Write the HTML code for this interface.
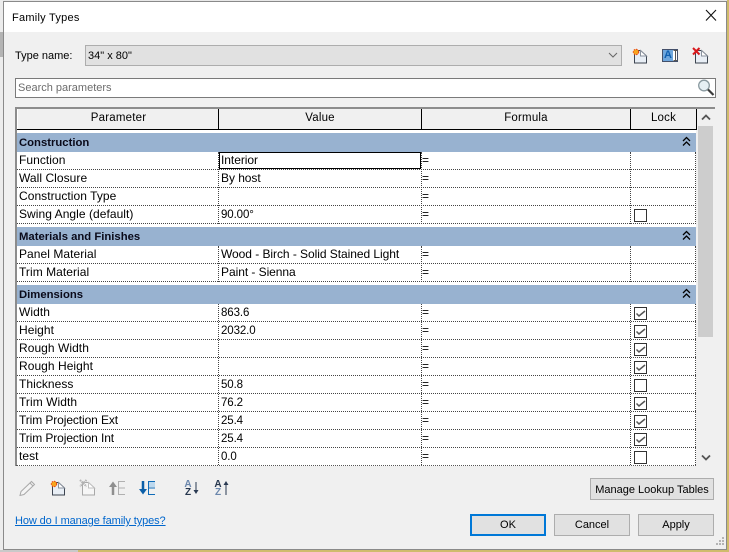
<!DOCTYPE html>
<html><head><meta charset="utf-8">
<style>
html,body{margin:0;padding:0;width:729px;height:552px;overflow:hidden;background:#e8e8e8;font-family:"Liberation Sans",sans-serif;font-size:12px;color:#000}
div,a,svg{position:absolute;box-sizing:border-box}
.t{white-space:nowrap;line-height:16px;height:16px;letter-spacing:.05px}
.s{font-size:11px;letter-spacing:0}
.v{letter-spacing:-.05px}
.n{font-size:11.5px;letter-spacing:-.1px;margin-top:1px}
.band{left:17px;width:679px;height:19px;background:#98b2d0}
.band .t{left:2px;top:2px;font-weight:bold;color:#0a0a1a;letter-spacing:0;font-size:11.3px}
.h{top:109px;height:20px;background:#f0f0f0;text-align:center;line-height:19px;font-size:11.5px;letter-spacing:.2px}
.dh{height:0;border-top:1px dotted #444}
.dv{width:0;border-left:1px dotted #444}
.cb{left:634px;width:13px;height:13px;border:1px solid #333;background:#fff}
.btn{background:#e1e1e1;border:1px solid #adadad;text-align:center;font-size:11px;white-space:nowrap}
</style></head><body>
<div style="left:0;top:0;width:3px;height:552px;background:#ececec"></div>
<div style="left:0;top:32px;width:3px;height:25px;background:#b4b4b4"></div>
<div style="left:727px;top:0;width:2px;height:552px;background:#cfbb6c"></div>
<div style="left:0;top:550px;width:729px;height:2px;background:#cfbb6c"></div>
<div style="left:0;top:550px;width:78px;height:2px;background:#c9c9c9"></div>
<div style="left:3px;top:1px;width:724px;height:549px;background:#f0f0f0;border:1px solid #8a8a8a"></div>
<div style="left:4px;top:2px;width:722px;height:30px;background:#fff"></div>
<div class="t s" style="left:12px;top:10px;letter-spacing:.25px">Family Types</div>
<svg style="left:705px;top:9px" width="12" height="13" viewBox="0 0 12 13"><path d="M1 1l10 10.500M11 1L1 11.500" stroke="#111" stroke-width="1.100" fill="none"/></svg>

<div class="t s" style="left:15px;top:48px">Type name:</div>
<div style="left:85px;top:45px;width:537px;height:21px;background:#e1e1e1;border:1px solid #adadad"></div>
<div class="t s" style="left:88px;top:48px">34" x 80"</div>
<svg style="left:608px;top:52px" width="10" height="7"><path d="M1 1l4 4 4-4" stroke="#666" fill="none"/></svg>

<svg style="left:631px;top:45px" width="18" height="19" viewBox="0 0 18 19"><path d="M3.500 5.500H9.500l6 5.500v7h-12z" fill="#e8eef5" stroke="#3c4450"/><path d="M9.500 5.500v5.500h6z" fill="#fff" stroke="#8a929e"/><circle cx="5" cy="7" r="2.700" fill="#f7a51e" stroke="#e8420e" stroke-dasharray="1.500 1"/></svg>
<div style="left:662px;top:49px;width:16px;height:13px;background:#fff;border:1px solid #44506a"></div>
<div style="left:663px;top:50px;width:10px;height:11px;background:#6ea6dc"></div>
<div style="left:663px;top:49px;width:10px;height:13px;color:#0f5fb0;font-weight:bold;font-size:11px;line-height:13px;text-align:center">A</div>
<svg style="left:673px;top:50px" width="5" height="11"><path d="M.5.500h4M.5 10.500h4M2.500.500v10" stroke="#555" fill="none"/></svg>
<svg style="left:692px;top:45px" width="18" height="19" viewBox="0 0 18 19"><path d="M3.500 5.500H9.500l6 5.500v7h-12z" fill="#e8eef5" stroke="#3c4450"/><path d="M9.500 5.500v5.500h6z" fill="#fff" stroke="#8a929e"/><path d="M1 3l6.500 6.500M7.500 3L1 9.500" stroke="#d8181c" stroke-width="2" fill="none"/></svg>

<div style="left:15px;top:78px;width:701px;height:20px;background:#fff;border:1px solid #7a7a7a"></div>
<div class="t s" style="left:18px;top:80px;color:#6d6d6d">Search parameters</div>
<svg style="left:697px;top:79px" width="18" height="18" viewBox="0 0 18 18"><circle cx="7" cy="6.500" r="5.300" fill="#e6f0f4" stroke="#8a9aa0" stroke-width="1.300"/><path d="M11 10.500l5.500 5.500" stroke="#3c3c3c" stroke-width="2.200"/></svg>

<!-- grid -->
<div style="left:15px;top:107px;width:700px;height:359px;background:#fff"></div>
<div style="left:15px;top:107px;width:700px;height:2px;background:#8c8c8c"></div>
<div style="left:15px;top:107px;width:2px;height:359px;background:#8c8c8c"></div>
<div style="left:16px;top:465px;width:680px;height:0;border-top:1px dotted #555"></div>
<div style="left:696px;top:109px;width:19px;height:357px;background:#f0f0f0"></div>
<div style="left:698px;top:126px;width:15px;height:211px;background:#cdcdcd"></div>
<svg style="left:701px;top:114px" width="10" height="7"><path d="M1 5.500l4-4 4 4" stroke="#555" stroke-width="1.800" fill="none"/></svg>
<svg style="left:701px;top:454px" width="10" height="7"><path d="M1 1.500l4 4 4-4" stroke="#555" stroke-width="1.800" fill="none"/></svg>

<div class="h" style="left:18px;width:201px">Parameter</div>
<div class="h" style="left:219px;width:202px">Value</div>
<div class="h" style="left:422px;width:208px">Formula</div>
<div class="h" style="left:631px;width:65px">Lock</div>
<div style="left:17px;top:129px;width:680px;height:1px;background:#000"></div>
<div style="left:218px;top:109px;width:1px;height:20px;background:#000"></div>
<div style="left:421px;top:109px;width:1px;height:20px;background:#000"></div>
<div style="left:630px;top:109px;width:1px;height:20px;background:#000"></div>
<div style="left:696px;top:109px;width:1px;height:21px;background:#000"></div>

<!-- bands -->
<div class="band" style="top:133px"><div class="t">Construction</div></div>
<div class="band" style="top:227px"><div class="t">Materials and Finishes</div></div>
<div class="band" style="top:285px"><div class="t">Dimensions</div></div>
<svg style="left:682px;top:136px" width="9" height="11"><path d="M1 5l3.500-3.500L8 5M1 9.500L4.500 6 8 9.500" stroke="#000" stroke-width="1.300" fill="none"/></svg>
<svg style="left:682px;top:230px" width="9" height="11"><path d="M1 5l3.500-3.500L8 5M1 9.500L4.500 6 8 9.500" stroke="#000" stroke-width="1.300" fill="none"/></svg>
<svg style="left:682px;top:288px" width="9" height="11"><path d="M1 5l3.500-3.500L8 5M1 9.500L4.500 6 8 9.500" stroke="#000" stroke-width="1.300" fill="none"/></svg>

<!-- dotted horizontals -->
<div class="dh" style="left:17px;width:679px;top:169px"></div>
<div class="dh" style="left:17px;width:679px;top:187px"></div>
<div class="dh" style="left:17px;width:679px;top:205px"></div>
<div class="dh" style="left:17px;width:679px;top:223px"></div>
<div class="dh" style="left:17px;width:679px;top:263px"></div>
<div class="dh" style="left:17px;width:679px;top:281px"></div>
<div class="dh" style="left:17px;width:679px;top:321px"></div>
<div class="dh" style="left:17px;width:679px;top:339px"></div>
<div class="dh" style="left:17px;width:679px;top:357px"></div>
<div class="dh" style="left:17px;width:679px;top:375px"></div>
<div class="dh" style="left:17px;width:679px;top:393px"></div>
<div class="dh" style="left:17px;width:679px;top:411px"></div>
<div class="dh" style="left:17px;width:679px;top:429px"></div>
<div class="dh" style="left:17px;width:679px;top:447px"></div>
<!-- dotted verticals -->
<div class="dv" style="left:218px;top:152px;height:72px"></div><div class="dv" style="left:421px;top:152px;height:72px"></div><div class="dv" style="left:630px;top:152px;height:72px"></div><div class="dv" style="left:695px;top:152px;height:72px"></div>
<div class="dv" style="left:218px;top:246px;height:36px"></div><div class="dv" style="left:421px;top:246px;height:36px"></div><div class="dv" style="left:630px;top:246px;height:36px"></div><div class="dv" style="left:695px;top:246px;height:36px"></div>
<div class="dv" style="left:218px;top:304px;height:161px"></div><div class="dv" style="left:421px;top:304px;height:161px"></div><div class="dv" style="left:630px;top:304px;height:161px"></div><div class="dv" style="left:695px;top:304px;height:161px"></div>

<!-- active cell -->
<div style="left:219px;top:152px;width:202px;height:17px;background:#fff;border:1px solid #000"></div>

<!-- labels -->
<div class="t" style="left:19px;top:152px">Function</div><div class="t v" style="left:221px;top:152px">Interior</div><div class="t" style="left:422px;top:152px">=</div>
<div class="t" style="left:19px;top:170px">Wall Closure</div><div class="t v" style="left:221px;top:170px">By host</div><div class="t" style="left:422px;top:170px">=</div>
<div class="t" style="left:19px;top:188px">Construction Type</div><div class="t" style="left:422px;top:188px">=</div>
<div class="t" style="left:19px;top:206px">Swing Angle (default)</div><div class="t n" style="left:221px;top:206px">90.00°</div><div class="t" style="left:422px;top:206px">=</div>
<div class="t" style="left:19px;top:246px">Panel Material</div><div class="t v" style="left:221px;top:246px">Wood - Birch - Solid Stained Light</div><div class="t" style="left:422px;top:246px">=</div>
<div class="t" style="left:19px;top:264px">Trim Material</div><div class="t v" style="left:221px;top:264px">Paint - Sienna</div><div class="t" style="left:422px;top:264px">=</div>
<div class="t" style="left:19px;top:304px">Width</div><div class="t n" style="left:221px;top:304px">863.6</div><div class="t" style="left:422px;top:304px">=</div>
<div class="t" style="left:19px;top:322px">Height</div><div class="t n" style="left:221px;top:322px">2032.0</div><div class="t" style="left:422px;top:322px">=</div>
<div class="t" style="left:19px;top:340px">Rough Width</div><div class="t" style="left:422px;top:340px">=</div>
<div class="t" style="left:19px;top:358px">Rough Height</div><div class="t" style="left:422px;top:358px">=</div>
<div class="t" style="left:19px;top:376px">Thickness</div><div class="t n" style="left:221px;top:376px">50.8</div><div class="t" style="left:422px;top:376px">=</div>
<div class="t" style="left:19px;top:394px">Trim Width</div><div class="t n" style="left:221px;top:394px">76.2</div><div class="t" style="left:422px;top:394px">=</div>
<div class="t" style="left:19px;top:412px;letter-spacing:-.1px">Trim Projection Ext</div><div class="t n" style="left:221px;top:412px">25.4</div><div class="t" style="left:422px;top:412px">=</div>
<div class="t" style="left:19px;top:430px;letter-spacing:-.1px">Trim Projection Int</div><div class="t n" style="left:221px;top:430px">25.4</div><div class="t" style="left:422px;top:430px">=</div>
<div class="t" style="left:19px;top:448px">test</div><div class="t n" style="left:221px;top:448px">0.0</div><div class="t" style="left:422px;top:448px">=</div>

<!-- checkboxes -->
<div class="cb" style="top:209px"></div>
<div class="cb" style="top:307px"><svg style="left:0;top:0" width="11" height="11"><path d="M1.500 5.500l2.500 2.500 6-5" stroke="#555" stroke-width="1.500" fill="none"/></svg></div>
<div class="cb" style="top:325px"><svg style="left:0;top:0" width="11" height="11"><path d="M1.500 5.500l2.500 2.500 6-5" stroke="#555" stroke-width="1.500" fill="none"/></svg></div>
<div class="cb" style="top:343px"><svg style="left:0;top:0" width="11" height="11"><path d="M1.500 5.500l2.500 2.500 6-5" stroke="#555" stroke-width="1.500" fill="none"/></svg></div>
<div class="cb" style="top:361px"><svg style="left:0;top:0" width="11" height="11"><path d="M1.500 5.500l2.500 2.500 6-5" stroke="#555" stroke-width="1.500" fill="none"/></svg></div>
<div class="cb" style="top:379px"></div>
<div class="cb" style="top:397px"><svg style="left:0;top:0" width="11" height="11"><path d="M1.500 5.500l2.500 2.500 6-5" stroke="#555" stroke-width="1.500" fill="none"/></svg></div>
<div class="cb" style="top:415px"><svg style="left:0;top:0" width="11" height="11"><path d="M1.500 5.500l2.500 2.500 6-5" stroke="#555" stroke-width="1.500" fill="none"/></svg></div>
<div class="cb" style="top:433px"><svg style="left:0;top:0" width="11" height="11"><path d="M1.500 5.500l2.500 2.500 6-5" stroke="#555" stroke-width="1.500" fill="none"/></svg></div>
<div class="cb" style="top:451px"></div>

<!-- toolbar -->
<svg style="left:19px;top:480px" width="18" height="18" viewBox="0 0 18 18"><path d="M1 15.500l1-4L12.500 1.500l3 3L5 14.500z" fill="#f4f4f4" stroke="#a8a8a8"/><path d="M11 3l3 3" stroke="#a8a8a8"/></svg>
<svg style="left:49px;top:477px" width="18" height="19" viewBox="0 0 18 19"><path d="M3.500 5.500H9.500l6 5.500v7h-12z" fill="#e8eef5" stroke="#3c4450"/><path d="M9.500 5.500v5.500h6z" fill="#fff" stroke="#8a929e"/><circle cx="5" cy="7" r="2.700" fill="#f7a51e" stroke="#e8420e" stroke-dasharray="1.500 1"/></svg>
<svg style="left:79px;top:477px" width="18" height="19" viewBox="0 0 18 19"><path d="M3.500 5.500H9.500l6 5.500v7h-12z" fill="#f6f6f6" stroke="#a8a8a8"/><path d="M9.500 5.500v5.500h6z" fill="#fff" stroke="#c0c0c0"/><path d="M1 3l6.500 6.500M7.500 3L1 9.500" stroke="#b4b4b4" stroke-width="2" stroke-dasharray="1.500 .7" fill="none"/></svg>
<svg style="left:108px;top:480px" width="18" height="16" viewBox="0 0 18 16"><path d="M5 15V6" stroke="#8f8f8f" stroke-width="2.500"/><path d="M1 7L5 1.500 9 7z" fill="#8f8f8f"/><path d="M17 1.500h-6.500v13H17M10.500 8H17" stroke="#b0b0b0" fill="none"/></svg>
<svg style="left:138px;top:480px" width="18" height="16" viewBox="0 0 18 16"><path d="M5 1v9" stroke="#0b5fa8" stroke-width="2.500"/><path d="M1 9l4 5.500L9 9z" fill="#0b5fa8"/><path d="M11 2h6v5h-6z" fill="#bcd8ee"/><path d="M17 1.500h-6.500v13H17M10.500 8H17" stroke="#0f6cb8" fill="none"/></svg>
<div style="left:183px;top:480px;width:10px;height:9px;font:bold 10px/9px 'Liberation Sans',sans-serif;color:#6a86ac;text-align:center">A</div>
<div style="left:183px;top:488px;width:10px;height:9px;font:bold 10px/9px 'Liberation Sans',sans-serif;color:#26364e;text-align:center">Z</div>
<svg style="left:193px;top:482px" width="6" height="13"><path d="M3 0v9" stroke="#2a3a52"/><path d="M.5 8h5L3 12z" fill="#2a3a52"/></svg>
<div style="left:213px;top:480px;width:10px;height:9px;font:bold 10px/9px 'Liberation Sans',sans-serif;color:#26364e;text-align:center">A</div>
<div style="left:213px;top:488px;width:10px;height:9px;font:bold 10px/9px 'Liberation Sans',sans-serif;color:#6a86ac;text-align:center">Z</div>
<svg style="left:223px;top:480px" width="6" height="15"><path d="M3 4v11" stroke="#2a3a52"/><path d="M.5 5h5L3 1z" fill="#2a3a52"/></svg>

<a class="t s" style="left:15px;top:513px;color:#0066cc;text-decoration:underline;letter-spacing:-.1px">How do I manage family types?</a>

<div class="btn" style="left:590px;top:478px;width:124px;height:22px;line-height:22px">Manage Lookup Tables</div>
<div class="btn" style="left:470px;top:514px;width:76px;height:22px;line-height:19px;border:2px solid #0078d7">OK</div>
<div class="btn" style="left:554px;top:514px;width:76px;height:22px;line-height:21px">Cancel</div>
<div class="btn" style="left:638px;top:514px;width:76px;height:22px;line-height:21px">Apply</div>

<svg style="left:716px;top:537px" width="10" height="10" fill="#b4b4b4"><rect x="6" y="0" width="2" height="2"/><rect x="3" y="3" width="2" height="2"/><rect x="6" y="3" width="2" height="2"/><rect x="0" y="6" width="2" height="2"/><rect x="3" y="6" width="2" height="2"/><rect x="6" y="6" width="2" height="2"/></svg>
</body></html>
